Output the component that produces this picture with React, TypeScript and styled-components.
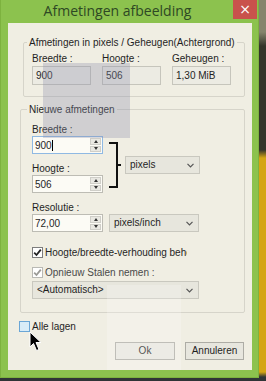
import React from 'react';
import styled, { createGlobalStyle } from 'styled-components';

const GlobalStyle = createGlobalStyle`
  html, body {
    margin: 0;
    padding: 0;
  }
  body {
    width: 266px;
    height: 381px;
    overflow: hidden;
    font-family: 'Liberation Sans', Arial, sans-serif;
  }
`;

// Desktop behind the dialog (only the right strip and bottom show)
const Desktop = styled.div`
  position: relative;
  width: 266px;
  height: 381px;
  background: linear-gradient(
    to bottom,
    #85846c 0,
    #85846c 32px,
    #34352a 46px,
    #34352a 150px,
    #d4a514 158px,
    #d4a514 372px,
    #2f3436 377px
  );
`;

const Window = styled.div`
  position: absolute;
  left: 0;
  top: 0;
  width: 259px;
  height: 378px;
  background: #8cc24e;
  box-shadow: inset 1px 0 0 #7db23f, inset -1px 0 0 #7db23f, inset 0 -1px 0 #7db23f;
  display: flex;
  flex-direction: column;
`;

const TitleBar = styled.div`
  position: relative;
  height: 23px;
  flex: none;
  display: flex;
  justify-content: center;
  padding-right: 24px;
`;

const Title = styled.div`
  font-family: 'Open Sans', 'Liberation Sans', sans-serif;
  font-size: 14px;
  line-height: 22px;
  color: #2e4824;
  white-space: nowrap;
`;

const CloseButton = styled.div`
  position: absolute;
  right: 2px;
  top: 0;
  width: 24px;
  height: 19px;
  background: #c9524c;
  color: #fff;
  font-size: 14px;
  line-height: 18px;
  text-align: center;
  font-family: 'DejaVu Sans', sans-serif;
`;

const Client = styled.div`
  position: relative;
  margin: 0 7px 8px 8px;
  flex: 1;
  background: #f0eee3;
  padding-top: 13px;
  display: flex;
  flex-direction: column;
  align-items: flex-start;
  font-size: 10px;
  color: #1f1f1f;
  overflow: hidden;
`;

const Group = styled.fieldset<{ $left: number }>`
  align-self: stretch;
  margin: 0 7px 0 ${(p) => p.$left}px;
  border: 1px solid #d6d4ca;
  border-radius: 2px;
  min-width: 0;
  display: flex;
  flex-direction: column;
  align-items: flex-start;
`;

const Legend = styled.legend<{ $shift: number }>`
  padding: 0 2px;
  margin-left: ${(p) => p.$shift}px;
  line-height: 13px;
  font-size: 10px;
  white-space: nowrap;
  color: #1f1f1f;
`;

const InfoGroup = styled(Group)`
  padding: 3px 0 11px 8px;
`;

const NewGroup = styled(Group)`
  margin-top: 6px;
  padding: 7px 0 13px 11px;
`;

const InfoRow = styled.div`
  display: grid;
  grid-template-columns: 70px 70px 70px;
`;

const Label = styled.div`
  line-height: 13px;
  height: 13px;
  white-space: nowrap;
`;

const ReadField = styled.div`
  margin-top: 1px;
  width: 59px;
  height: 19px;
  box-sizing: border-box;
  border: 1px solid #c6c5bc;
  background: #ecebe3;
  padding-left: 3px;
  line-height: 17px;
`;

const SizeRow = styled.div`
  display: flex;
  align-items: flex-start;
`;

const Column = styled.div`
  display: flex;
  flex-direction: column;
`;

const SpinBox = styled.div<{ $focus?: boolean }>`
  width: 71px;
  height: 18px;
  box-sizing: border-box;
  border: 1px solid ${(p) => (p.$focus ? '#8fb9e3' : '#bdbcb4')};
  background: #fcfbf5;
  display: flex;
  align-items: stretch;
`;

const SpinText = styled.div`
  flex: 1;
  padding-left: 2px;
  display: flex;
  align-items: center;
`;

const Caret = styled.span`
  display: inline-block;
  width: 1px;
  height: 11px;
  background: #000;
`;

const SpinButtons = styled.div`
  width: 11px;
  margin: 1px 1px 1px 0;
  display: flex;
  flex-direction: column;
  gap: 1px;
`;

const SpinArrow = styled.div<{ $down?: boolean }>`
  flex: 1;
  background: #e9e8e2;
  border: 1px solid #cfcec8;
  display: flex;
  align-items: center;
  justify-content: center;
  &::after {
    content: '';
    border-left: 2px solid transparent;
    border-right: 2px solid transparent;
    ${(p) => (p.$down ? 'border-top: 3px solid #333;' : 'border-bottom: 3px solid #333;')}
  }
`;

const GapLabel = styled(Label)<{ $top: number }>`
  margin-top: ${(p) => p.$top}px;
`;

const Bracket = styled.svg`
  flex: none;
  margin-left: 6px;
`;

const Combo = styled.div<{ $width: number; $top?: number; $left?: number }>`
  width: ${(p) => p.$width}px;
  height: 18px;
  flex: none;
  box-sizing: border-box;
  margin-top: ${(p) => p.$top ?? 0}px;
  margin-left: ${(p) => p.$left ?? 0}px;
  border: 1px solid #c9c8bf;
  background: #e7e6dd;
  display: flex;
  align-items: center;
  justify-content: space-between;
  padding: 0 5px 0 4px;
  line-height: 16px;
`;

const Chevron = () => (
  <svg width="7" height="5" viewBox="0 0 7 5">
    <path d="M0.5 0.8 L3.5 3.8 L6.5 0.8" fill="none" stroke="#555" strokeWidth="1.2" />
  </svg>
);

const ResRow = styled.div`
  display: flex;
  gap: 6px;
`;

const CheckRow = styled.div<{ $top: number; $width?: number; $disabled?: boolean }>`
  margin-top: ${(p) => p.$top}px;
  display: flex;
  align-items: center;
  gap: 2px;
  height: 13px;
  flex: none;
  max-width: ${(p) => (p.$width ? `${p.$width}px` : 'none')};
  overflow: hidden;
  white-space: nowrap;
  color: ${(p) => (p.$disabled ? '#4a4a4a' : '#1f1f1f')};
`;

const Box = styled.div<{ $hover?: boolean; $disabled?: boolean }>`
  flex: none;
  width: 11px;
  height: 11px;
  box-sizing: border-box;
  border: 1px solid ${(p) => (p.$hover ? '#6aa6d6' : p.$disabled ? '#b9b9b4' : '#7d7d7d')};
  background: ${(p) => (p.$hover ? '#d8ecf8' : '#fff')};
  display: flex;
  align-items: center;
  justify-content: center;
`;

const Tick = ({ color }: { color: string }) => (
  <svg width="9" height="9" viewBox="0 0 9 9">
    <path d="M1.2 4.6 L3.5 7 L7.8 1.6" fill="none" stroke={color} strokeWidth="1.8" />
  </svg>
);

const AllLayers = styled(CheckRow)`
  margin-left: 11px;
`;

const ButtonRow = styled.div`
  align-self: stretch;
  margin-top: 9px;
  margin-right: 8px;
  display: flex;
  justify-content: flex-end;
  gap: 10px;
`;

const Button = styled.div<{ $width: number }>`
  width: ${(p) => p.$width}px;
  height: 18px;
  box-sizing: border-box;
  border: 1px solid #adaca5;
  background: #e7e6de;
  text-align: center;
  line-height: 16px;
`;

// translucent screen overlays visible in the capture
const GreyPatch = styled.div`
  position: absolute;
  left: 35px;
  top: 40px;
  width: 87px;
  height: 75px;
  background: rgba(140, 144, 170, 0.32);
  pointer-events: none;
`;

const LightStripe = styled.div`
  position: absolute;
  left: 99px;
  top: 262px;
  width: 74px;
  bottom: 0;
  background: rgba(255, 255, 255, 0.22);
  pointer-events: none;
`;

const Cursor = styled.svg`
  position: absolute;
  left: 29px;
  top: 331px;
`;

const Spin = ({ value, focus }: { value: string; focus?: boolean }) => (
  <SpinBox $focus={focus}>
    <SpinText>
      {value}
      {focus && <Caret />}
    </SpinText>
    <SpinButtons>
      <SpinArrow />
      <SpinArrow $down />
    </SpinButtons>
  </SpinBox>
);

const App: React.FC = () => {
  const info = [
    { label: 'Breedte :', value: '900' },
    { label: 'Hoogte :', value: '506' },
    { label: 'Geheugen :', value: '1,30 MiB' },
  ];

  return (
    <>
      <GlobalStyle />
      <Desktop>
        <Window>
          <TitleBar>
            <Title>Afmetingen afbeelding</Title>
            <CloseButton>×</CloseButton>
          </TitleBar>
          <Client>
            <InfoGroup $left={15}>
              <Legend $shift={-5}>Afmetingen in pixels / Geheugen(Achtergrond)</Legend>
              <InfoRow>
                {info.map((i) => (
                  <div key={i.label}>
                    <Label>{i.label}</Label>
                    <ReadField>{i.value}</ReadField>
                  </div>
                ))}
              </InfoRow>
            </InfoGroup>

            <NewGroup $left={12}>
              <Legend $shift={-5}>Nieuwe afmetingen</Legend>
              <SizeRow>
                <Column>
                  <Label>Breedte :</Label>
                  <Spin value="900" focus />
                  <GapLabel $top={8}>Hoogte :</GapLabel>
                  <Spin value="506" />
                </Column>
                <Bracket width="12" height="72" viewBox="0 0 12 72">
                  <path d="M0 20 H8 V64 H0 M8 42 H12" fill="none" stroke="#111" strokeWidth="2" />
                </Bracket>
                <Combo $width={75} $top={33} $left={4}>
                  pixels
                  <Chevron />
                </Combo>
              </SizeRow>
              <GapLabel $top={6}>Resolutie :</GapLabel>
              <ResRow>
                <Spin value="72,00" />
                <Combo $width={90}>
                  pixels/inch
                  <Chevron />
                </Combo>
              </ResRow>
              <CheckRow $top={14} $width={155}>
                <Box>
                  <Tick color="#222" />
                </Box>
                Hoogte/breedte-verhouding behouden
              </CheckRow>
              <CheckRow $top={7} $disabled>
                <Box $disabled>
                  <Tick color="#9a9a96" />
                </Box>
                Opnieuw Stalen nemen :
              </CheckRow>
              <Combo $width={167} $top={2}>
                &lt;Automatisch&gt;
                <Chevron />
              </Combo>
            </NewGroup>

            <AllLayers $top={7}>
              <Box $hover />
              Alle lagen
            </AllLayers>

            <ButtonRow>
              <Button $width={60}>Ok</Button>
              <Button $width={59}>Annuleren</Button>
            </ButtonRow>

            <GreyPatch />
            <LightStripe />
          </Client>
          <Cursor width="14" height="22" viewBox="0 0 14 22">
            <path d="M1 1 L1 16 L4.5 12.5 L7.5 19.5 L10 18.5 L7 11.5 L12 11.5 Z" fill="#000" stroke="#fff" strokeWidth="1" />
          </Cursor>
        </Window>
      </Desktop>
    </>
  );
};

export default App;
